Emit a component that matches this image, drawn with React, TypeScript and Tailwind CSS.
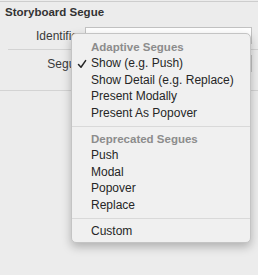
import React from "react";

type MenuEntry =
  | { kind: "header"; label: string }
  | { kind: "item"; label: string; checked?: boolean }
  | { kind: "sep" };

const entries: MenuEntry[] = [
  { kind: "header", label: "Adaptive Segues" },
  { kind: "item", label: "Show (e.g. Push)", checked: true },
  { kind: "item", label: "Show Detail (e.g. Replace)" },
  { kind: "item", label: "Present Modally" },
  { kind: "item", label: "Present As Popover" },
  { kind: "sep" },
  { kind: "header", label: "Deprecated Segues" },
  { kind: "item", label: "Push" },
  { kind: "item", label: "Modal" },
  { kind: "item", label: "Popover" },
  { kind: "item", label: "Replace" },
  { kind: "sep" },
  { kind: "item", label: "Custom" },
];

const Check = () => (
  <svg width="10" height="10" viewBox="0 0 10 10" className="absolute left-[5px] top-[3.5px]">
    <path d="M1.5 5.5 L4 8.2 L8.6 1.6" fill="none" stroke="#262626" strokeWidth="1.5" strokeLinecap="round" strokeLinejoin="round" />
  </svg>
);

const SegueMenu: React.FC = () => (
  <div className="absolute left-[71px] top-[33px] w-[180px] rounded-[5px] border border-[#c4c4c4] bg-[#f0f0f0] pt-[4.75px] pb-[3px] shadow-[0_4px_10px_rgba(0,0,0,0.25)]">
    {entries.map((e, i) => {
      if (e.kind === "sep") {
        return (
          <div key={i} className="flex h-[9.5px] items-center">
            <div className="h-px w-full bg-[#d9d9d9]" />
          </div>
        );
      }
      if (e.kind === "header") {
        return (
          <div key={i} className="h-[16.5px] pl-[19px] text-[11.5px] leading-[16.5px] font-bold text-[#8c8c8c]">
            {e.label}
          </div>
        );
      }
      return (
        <div key={i} className="relative h-[16.5px] pl-[19px] text-[12px] leading-[16.5px] text-[#262626]">
          {e.checked && <Check />}
          {e.label}
        </div>
      );
    })}
  </div>
);

export default function App() {
  return (
    <div className="relative h-[275px] w-[258px] overflow-hidden bg-[#ececec] font-['Liberation_Sans',Arial,sans-serif]">
      <div className="mt-px h-px bg-[#cdcdcd]" />
      <div className="h-[20px] px-[5px] text-[11.5px] leading-[20px] font-bold text-[#333]">
        Storyboard Segue
      </div>

      <div className="mt-[5px] flex h-[17px] items-center">
        <div className="w-[82px] text-right text-[12px] text-[#3a3a3a]">Identifier</div>
        <div className="ml-[3px] h-[17px] w-[167px] border border-[#c2c2c2] bg-white" />
      </div>

      <div className="mt-[5px] ml-[8px] h-px bg-[#d3d3d3]" />

      <div className="mt-[5px] flex h-[17px] items-center">
        <div className="w-[82px] text-right text-[12px] text-[#3a3a3a]">Segue</div>
        <div className="ml-[3px] flex h-[17px] w-[167px] overflow-hidden border border-[#c2c2c2] bg-white">
          <div className="flex-1" />
          <div className="w-[16px] bg-[#9aa6e6]" />
        </div>
      </div>

      <div className="mt-[18px] h-px bg-[#d3d3d3]" />

      <SegueMenu />
    </div>
  );
}
